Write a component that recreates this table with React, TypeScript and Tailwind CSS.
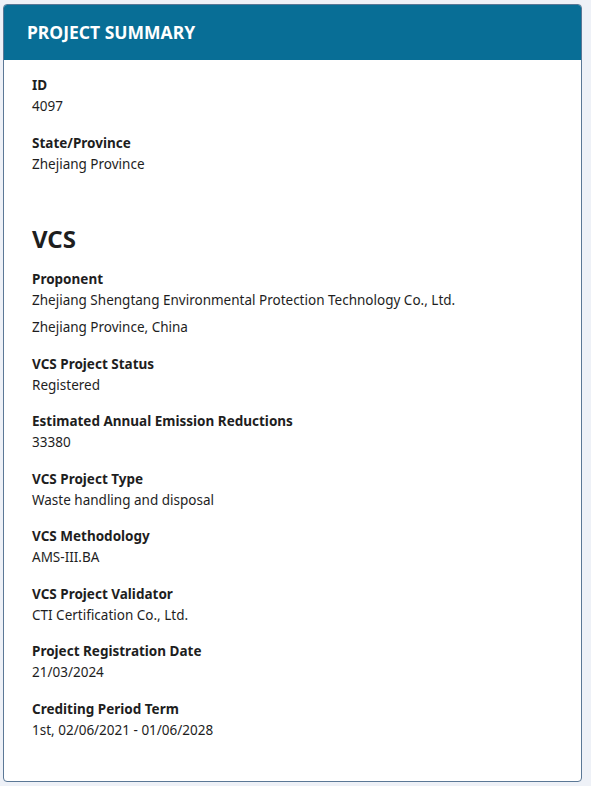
const items: { label: string; values: string[] }[] = [
  { label: "Proponent", values: ["Zhejiang Shengtang Environmental Protection Technology Co., Ltd.", "Zhejiang Province, China"] },
  { label: "VCS Project Status", values: ["Registered"] },
  { label: "Estimated Annual Emission Reductions", values: ["33380"] },
  { label: "VCS Project Type", values: ["Waste handling and disposal"] },
  { label: "VCS Methodology", values: ["AMS-III.BA"] },
  { label: "VCS Project Validator", values: ["CTI Certification Co., Ltd."] },
  { label: "Project Registration Date", values: ["21/03/2024"] },
  { label: "Crediting Period Term", values: ["1st, 02/06/2021 - 01/06/2028"] },
]

function Field({ label, values }: { label: string; values: string[] }) {
  return (
    <div className="mb-[15.5px]">
      <div className="text-[13.5px] leading-[21px] font-bold">{label}</div>
      {values.map((v, i) => (
        <div key={i} className={`text-[13.5px] leading-[21px] ${i > 0 ? "mt-[6px]" : ""}`}>
          {v}
        </div>
      ))}
    </div>
  )
}

export default function App() {
  return (
    <div className="min-h-screen bg-[#eef1f7] pt-[4px] pl-[3px] pr-[9px] pb-[5px] font-['Noto_Sans',sans-serif] text-[#1e1e1e]">
      <div className="border border-[#5b7896] rounded-[4px] bg-white overflow-hidden">
        {/* Header */}
        <div className="bg-[#086e96] h-[55px] flex items-center px-[23px]">
          <h1 className="text-white text-[17.5px] font-bold">PROJECT SUMMARY</h1>
        </div>

        {/* Body */}
        <div className="px-[28px] pt-[15px] pb-[25px]">
          <Field label="ID" values={["4097"]} />
          <Field label="State/Province" values={["Zhejiang Province"]} />

          <h2 className="mt-[49.5px] mb-[15px] text-[24px] leading-[30px] font-bold">VCS</h2>

          {items.map((it) => (
            <Field key={it.label} label={it.label} values={it.values} />
          ))}
        </div>
      </div>
    </div>
  )
}
